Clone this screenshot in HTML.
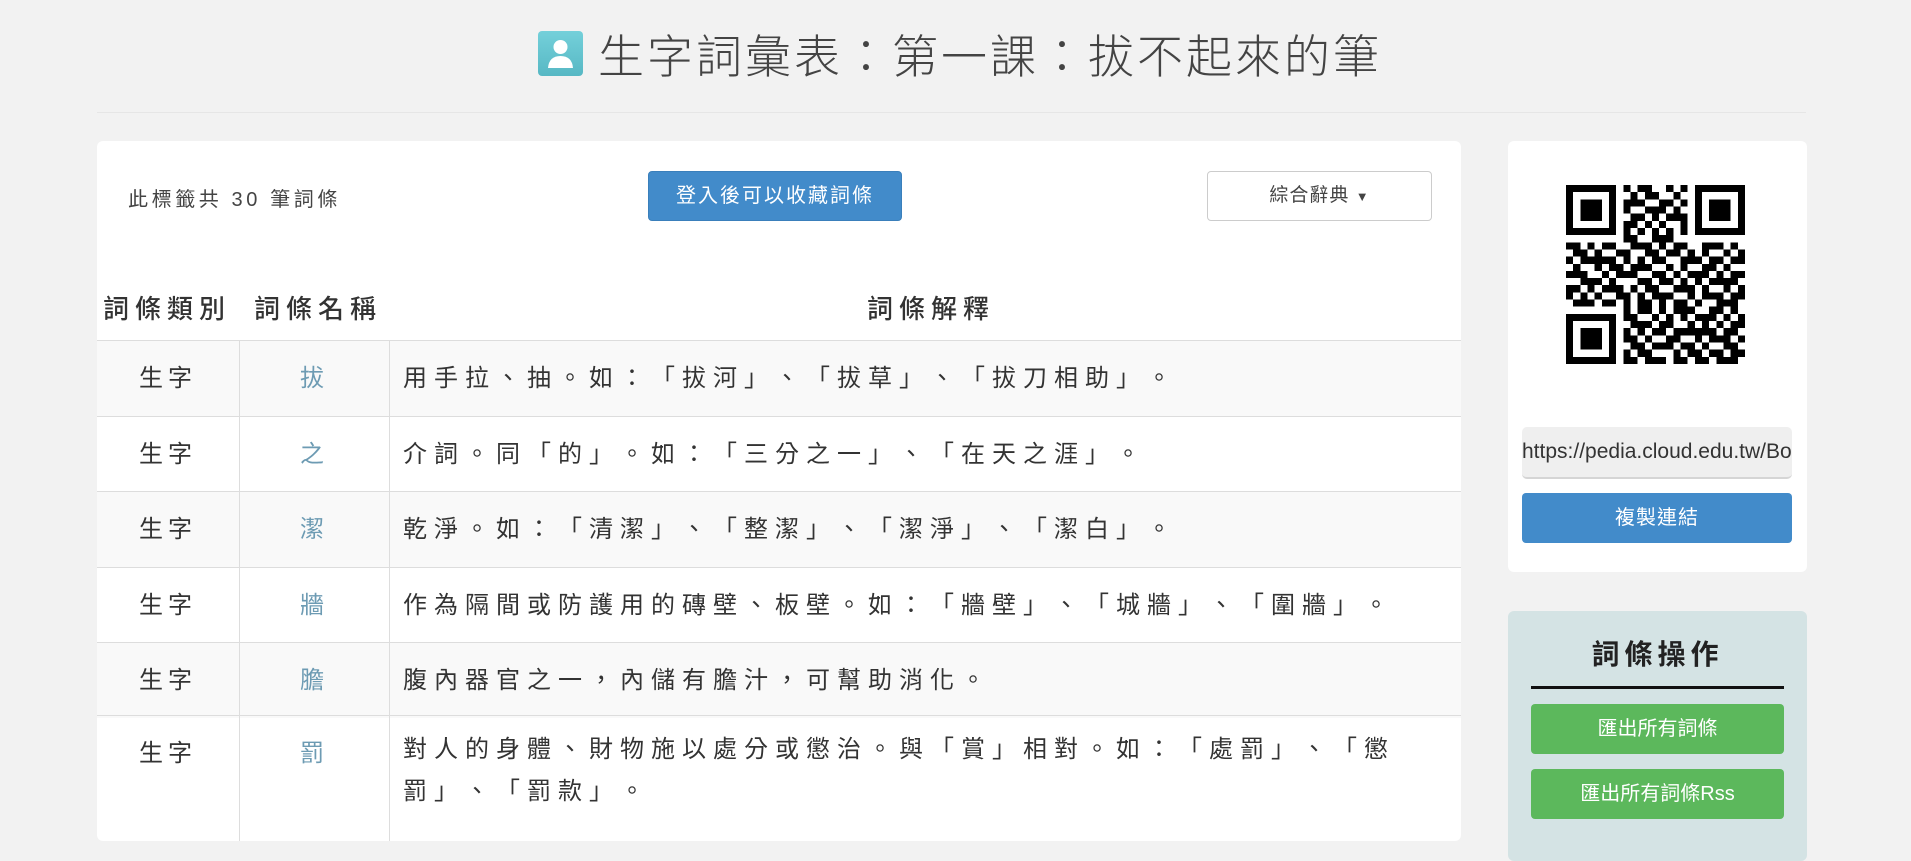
<!DOCTYPE html>
<html><head><meta charset="utf-8">
<style>
*{margin:0;padding:0;box-sizing:border-box}
body{width:1911px;height:815px;overflow:hidden;background:#f2f2f2;font-family:"Liberation Sans","Noto Sans CJK TC",sans-serif;color:#333;position:relative;text-spacing-trim:space-all}
.abs{position:absolute}
.title{left:598px;top:24px;font-size:46px;letter-spacing:3px;color:#444;white-space:nowrap;line-height:60px;font-family:"Noto Sans CJK TC",sans-serif;font-weight:300}
.icon{left:538px;top:31px;width:45px;height:45px;border-radius:4px;background:linear-gradient(#74d0da,#57b8c4)}
.hr{left:97px;top:112px;width:1709px;height:1px;background:#e6e6e6}
.card{left:97px;top:141px;width:1364px;height:700px;background:#fff;border-radius:6px;overflow:hidden}
.cnt{left:31px;top:42px;font-size:20px;letter-spacing:3.6px;color:#444}
.btn{left:551px;top:30px;width:254px;height:50px;background:#428bca;border:1px solid #3a7fbb;border-radius:4px;color:#fff;font-size:20px;letter-spacing:2px;text-align:center;line-height:48px}
.dd{left:1110px;top:30px;width:225px;height:50px;border:1px solid #ccc;border-radius:4px;color:#444;font-size:19px;text-align:center;line-height:48px;letter-spacing:1px}
.th{top:148px;font-size:26px;font-weight:500;letter-spacing:6px;color:#333}
.row{left:0;width:1364px;height:75.5px;border-top:1px solid #ddd}
.row.s{background:#f9f9f9}
.c1,.c2,.c3{position:absolute;top:0;height:100%;font-size:24px;letter-spacing:5px;line-height:75px}
.c3{letter-spacing:7px}
.c1{left:0;width:143px;text-align:center;border-right:1px solid #ddd}
.c2{left:143px;width:150px;text-align:center;border-right:1px solid #ddd;color:#6d9bb3}
.c3{left:306px;white-space:nowrap}
.rc{left:1508px;top:141px;width:299px;height:431px;background:#fff;border-radius:6px}
.url{left:14px;top:286px;width:270px;height:52px;background:#efefef;border-radius:5px;border-bottom:2px solid #d5d5d5;font-size:21px;letter-spacing:0px;line-height:50px;overflow:hidden;white-space:nowrap;color:#333}
.cp{left:14px;top:352px;width:270px;height:50px;background:#428bca;border-radius:4px;color:#fff;font-size:20px;text-align:center;line-height:50px;letter-spacing:1px}
.rc2{left:1508px;top:611px;width:299px;height:250px;background:#d4e3e4;border-radius:6px}
.op{left:0;width:299px;top:22px;text-align:center;font-size:28px;font-weight:bold;letter-spacing:5px;color:#222}
.ln{left:23px;top:75px;width:253px;height:3px;background:#111}
.g{left:23px;width:253px;height:50px;background:#5cb85c;border-radius:4px;color:#fff;text-align:center;font-size:20px;line-height:50px}
</style></head><body>
<div class="abs icon"><svg width="45" height="45" viewBox="0 0 45 45"><circle cx="22.5" cy="16" r="7" fill="#fff"/><path d="M10 37 Q11 25 22.5 25 Q34 25 35 37 Z" fill="#fff"/></svg></div>
<div class="abs title">生字詞彙表：第一課：拔不起來的筆</div>
<div class="abs hr"></div>
<div class="abs card">
  <div class="abs cnt">此標籤共 30 筆詞條</div>
  <div class="abs btn">登入後可以收藏詞條</div>
  <div class="abs dd">綜合辭典 <span style="font-size:13px">▼</span></div>
  <div class="abs th" style="left:6px">詞條類別</div>
  <div class="abs th" style="left:157px">詞條名稱</div>
  <div class="abs th" style="left:770px">詞條解釋</div>
  <div class="abs row s" style="top:199px"><div class="c1">生字</div><div class="c2">拔</div><div class="c3">用手拉、抽。如：「拔河」、「拔草」、「拔刀相助」。</div></div>
  <div class="abs row" style="top:274.5px"><div class="c1">生字</div><div class="c2">之</div><div class="c3">介詞。同「的」。如：「三分之一」、「在天之涯」。</div></div>
  <div class="abs row s" style="top:350px"><div class="c1">生字</div><div class="c2">潔</div><div class="c3">乾淨。如：「清潔」、「整潔」、「潔淨」、「潔白」。</div></div>
  <div class="abs row" style="top:425.5px"><div class="c1">生字</div><div class="c2">牆</div><div class="c3">作為隔間或防護用的磚壁、板壁。如：「牆壁」、「城牆」、「圍牆」。</div></div>
  <div class="abs row s" style="top:501px"><div class="c1">生字</div><div class="c2">膽</div><div class="c3">腹內器官之一，內儲有膽汁，可幫助消化。</div></div>
  <div class="abs row" style="top:574px;height:140px"><div class="c1">生字</div><div class="c2">罰</div><div class="c3" style="line-height:42px;top:13px">對人的身體、財物施以處分或懲治。與「賞」相對。如：「處罰」、「懲<br>罰」、「罰款」。</div></div>
</div>
<div class="abs rc">
  <svg id="qr" class="abs" style="left:58px;top:44px" width="179" height="179" viewBox="0 0 25 25" shape-rendering="crispEdges"></svg>
  <div class="abs url">https://pedia.cloud.edu.tw/Bookmark</div>
  <div class="abs cp">複製連結</div>
</div>
<div class="abs rc2">
  <div class="abs op">詞條操作</div>
  <div class="abs ln"></div>
  <div class="abs g" style="top:93px">匯出所有詞條</div>
  <div class="abs g" style="top:158px">匯出所有詞條Rss</div>
</div>
<script>
var rows=["1111111010110010101111111","1000001001011001001000001","1011101011100110101011101","1011101010011101001011101","1011101001101011101011101","1000001011010100101000001","1111111010101010101111111","0000000011001110000000000","1101011001110101100111010","0110100110011011010100101","1011111010101100111011011","0100101101110010100110100","1110010111001101011101011","0011101000110110101011110","1101011101011001110100101","1010100110101110010111011","0111011010110101101001110","0000000010110101110011010","1111111011001010101110101","1000001001110110010101011","1011101010101101111110110","1011101011010011001011101","1011101001101110110100110","1000001010110001011011011","1111111011011101101101110"];
var d="";for(var y=0;y<25;y++)for(var x=0;x<25;x++)if(rows[y][x]=="1")d+="M"+x+" "+y+"h1v1h-1z";
document.getElementById("qr").innerHTML='<path d="'+d+'" fill="#000"/>';
</script>
</body></html>
